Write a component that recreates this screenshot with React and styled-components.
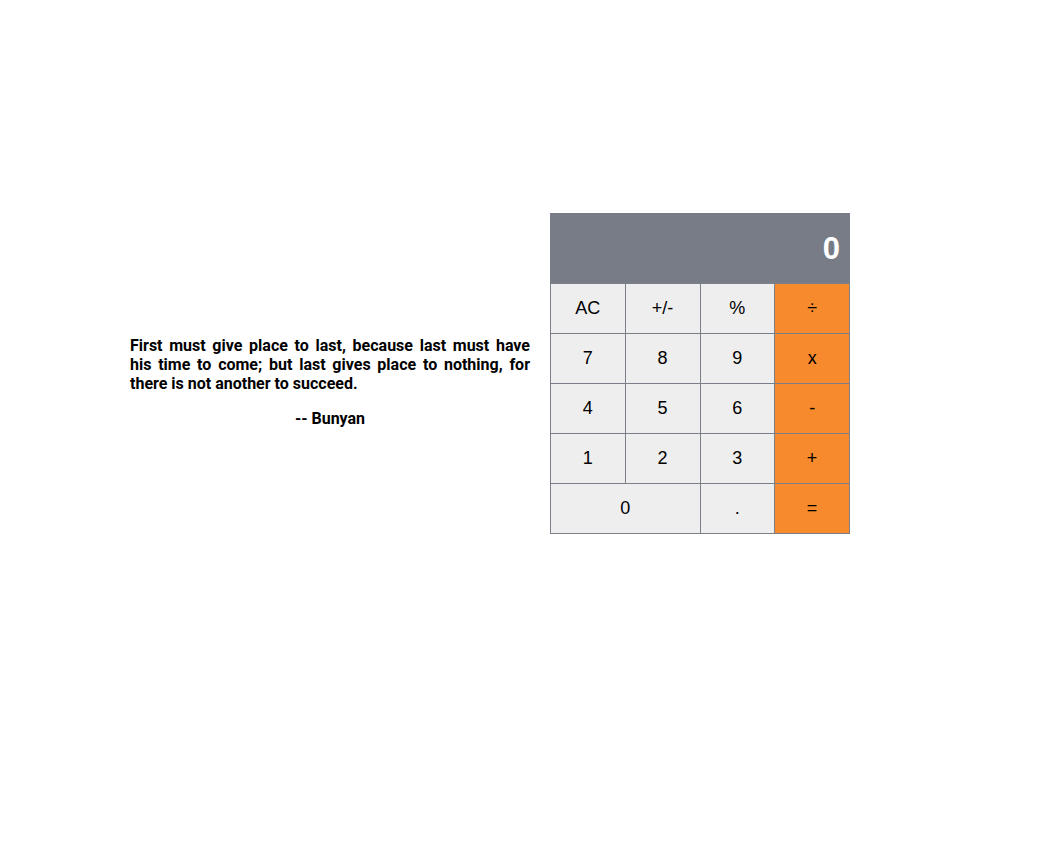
import styled, { createGlobalStyle } from "styled-components";

const GlobalStyle = createGlobalStyle`
  body {
    margin: 0;
    background: #ffffff;
    font-family: Roboto, "Liberation Sans", sans-serif;
  }
`;

const Page = styled.div`
  display: flex;
  align-items: center;
  gap: 20px;
  padding: 213px 0 0 130px;
`;

const Quote = styled.div`
  width: 400px;
  font-family: Roboto, sans-serif;
  font-weight: 700;
  font-size: 16px;
  color: #000;
  padding-top: 16px;
`;

const Text = styled.p`
  margin: 0;
  line-height: 19px;
  text-align: justify;
`;

const Author = styled.p`
  margin: 16px 0 0;
  line-height: 19px;
  text-align: center;
`;

const Calculator = styled.div`
  width: 300px;
  font-family: "Liberation Sans", Arial, sans-serif;
`;

const Display = styled.div`
  height: 70px;
  background: #777c86;
  color: #ffffff;
  font-size: 31px;
  font-weight: 700;
  display: flex;
  align-items: center;
  justify-content: flex-end;
  padding: 2px 10px 0 0;
  box-sizing: border-box;
`;

const Keypad = styled.div`
  display: grid;
  grid-template-columns: repeat(4, 1fr);
  border-left: 1px solid #7a7f88;
  border-top: 1px solid #7a7f88;
`;

const Key = styled.button`
  grid-column: span ${(p) => p.$span || 1};
  height: 50px;
  border: none;
  border-right: 1px solid #7a7f88;
  border-bottom: 1px solid #7a7f88;
  background: ${(p) => (p.$op ? "#f68a2d" : "#eeeeee")};
  color: #000;
  font-family: "Liberation Sans", Arial, sans-serif;
  font-size: 18px;
  padding: 0;
  cursor: pointer;
`;

const keys = [
  ["AC"], ["+/-"], ["%"], ["÷", true],
  ["7"], ["8"], ["9"], ["x", true],
  ["4"], ["5"], ["6"], ["-", true],
  ["1"], ["2"], ["3"], ["+", true],
];

const App = () => {
  return (
    <>
      <GlobalStyle />
      <Page>
        <Quote>
          <Text>
            First must give place to last, because last must have his time to
            come; but last gives place to nothing, for there is not another to
            succeed.
          </Text>
          <Author>-- Bunyan</Author>
        </Quote>
        <Calculator>
          <Display>0</Display>
          <Keypad>
            {keys.map(([label, op]) => (
              <Key key={label} $op={op}>
                {label}
              </Key>
            ))}
            <Key $span={2}>0</Key>
            <Key>.</Key>
            <Key $op>=</Key>
          </Keypad>
        </Calculator>
      </Page>
    </>
  );
};

export default App;
